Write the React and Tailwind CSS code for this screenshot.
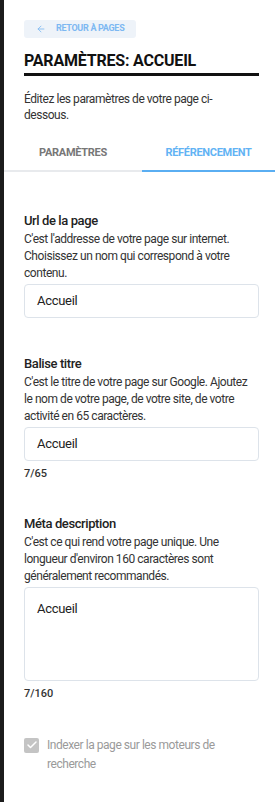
import { ArrowLeft, Check } from 'lucide-react';

const font = { fontFamily: 'Roboto, "Liberation Sans", sans-serif' };

const Field = ({ label, help, value, counter, multiline }) => (
  <div className="pl-5 pr-4">
    <div className="text-[13px] font-medium leading-[17px] tracking-[-0.4px] text-[#222]">{label}</div>
    <p className="mt-[2px] pr-[8px] text-[12px] leading-[17px] tracking-[-0.45px] text-[#333]">{help}</p>
    {multiline ? (
      <div className="mt-[2px] h-[94px] rounded-[4px] border border-[#dde3ea] px-3 pt-[11px] text-[13px] tracking-[-0.3px] text-[#222]">
        {value}
      </div>
    ) : (
      <div className="mt-[2px] flex h-[34px] items-center rounded-[4px] border border-[#dde3ea] px-3 text-[13px] tracking-[-0.3px] text-[#222]">
        {value}
      </div>
    )}
    {counter && <div className="mt-[5px] -mb-[4px] text-[11px] font-medium text-[#333]">{counter}</div>}
  </div>
);

export default function App() {
  return (
    <div className="flex min-h-[802px] w-[275px] bg-white" style={font}>
      <div className="w-[4px] shrink-0 bg-[#1c1c1c]" />
      <div className="flex-1">
        <div className="pl-5 pr-4 pt-5">
          <button className="flex h-[18px] items-center gap-[10px] rounded-[3px] bg-[#eef3f9] pl-[12px] pr-[12px] text-[9px] font-bold uppercase tracking-[-0.3px] text-[#7db8f2]">
            <ArrowLeft className="h-[10px] w-[10px]" strokeWidth={2} />
            Retour à pages
          </button>
          <h1 className="mt-[12px] text-[16px] font-bold uppercase leading-[22px] tracking-[-0.2px] text-[#111]">
            Paramètres: Accueil
          </h1>
          <div className="mt-[1px] h-[3px] bg-[#111]" />
          <p className="mt-[15px] pr-10 text-[12px] leading-[16px] tracking-[-0.45px] text-[#333]">
            Éditez les paramètres de votre page ci-dessous.
          </p>
        </div>
        <div className="mt-[22px] flex border-b-2 border-[#e8eaed] text-[11px] font-bold uppercase tracking-[-0.3px]">
          <div className="w-[138px] pb-[8px] text-center text-[#777]">Paramètres</div>
          <div className="-mb-[2px] flex-1 border-b-2 border-[#5aaef2] pb-[6px] text-center text-[#62b3f4]">
            Référencement
          </div>
        </div>
        <div className="flex flex-col gap-[37px] pt-[40px]">
          <Field
            label="Url de la page"
            help="C'est l'addresse de votre page sur internet. Choisissez un nom qui correspond à votre contenu."
            value="Accueil"
          />
          <Field
            label="Balise titre"
            help="C'est le titre de votre page sur Google. Ajoutez le nom de votre page, de votre site, de votre activité en 65 caractères."
            value="Accueil"
            counter="7/65"
          />
          <Field
            label="Méta description"
            help="C'est ce qui rend votre page unique. Une longueur d'environ 160 caractères sont généralement recommandés."
            value="Accueil"
            counter="7/160"
            multiline
          />
          <div className="flex items-start gap-[8px] pl-5 pr-4">
            <div className="mt-[2px] flex h-[15px] w-[15px] shrink-0 items-center justify-center rounded-[2px] bg-[#c4c4c4]">
              <Check className="h-[12px] w-[12px] text-white" strokeWidth={3} />
            </div>
            <p className="pr-8 text-[12px] leading-[19px] tracking-[-0.45px] text-[#9a9a9a]">
              Indexer la page sur les moteurs de recherche
            </p>
          </div>
        </div>
      </div>
    </div>
  );
}
